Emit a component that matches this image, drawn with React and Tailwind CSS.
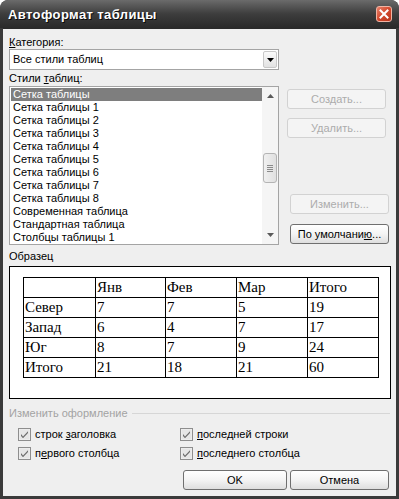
import React from "react";

const styles = [
  "Сетка таблицы",
  "Сетка таблицы 1",
  "Сетка таблицы 2",
  "Сетка таблицы 3",
  "Сетка таблицы 4",
  "Сетка таблицы 5",
  "Сетка таблицы 6",
  "Сетка таблицы 7",
  "Сетка таблицы 8",
  "Современная таблица",
  "Стандартная таблица",
  "Столбцы таблицы 1",
];

const rows = [
  ["", "Янв", "Фев", "Мар", "Итого"],
  ["Север", "7", "7", "5", "19"],
  ["Запад", "6", "4", "7", "17"],
  ["Юг", "8", "7", "9", "24"],
  ["Итого", "21", "18", "21", "60"],
];

const Button = ({ children, disabled, className = "" }) => (
  <div
    className={
      "h-[20px] flex items-center justify-center rounded-[3px] border " +
      (disabled
        ? "border-[#d2d2d2] bg-[#f4f4f4] text-[#acacac] "
        : "border-[#6f6f6f] bg-linear-to-b from-white via-[#f4f4f4] to-[#dedede] text-black ") +
      className
    }
  >
    {children}
  </div>
);

const Check = ({ children }) => (
  <div className="flex items-center h-[13px]">
    <svg width="13" height="13" viewBox="0 0 13 13">
      <rect x="0.5" y="0.5" width="12" height="12" fill="#f2f2f2" stroke="#8e8e8e" />
      <rect x="1.5" y="1.5" width="10" height="10" fill="#e6e6e6" />
      <path d="M3 6 L5 8.5 L10 3.2 L10 5 L5 10.3 L3 8 Z" fill="#6e6e6e" />
    </svg>
    <span className="ml-[4px]">{children}</span>
  </div>
);

export default function App() {
  return (
    <div className="w-[399px] h-[499px] bg-[#3a3a3a] rounded-t-[8px] flex flex-col font-['Liberation_Sans',Arial,sans-serif] text-[11px] leading-[13px] text-black overflow-hidden">
      {/* title bar */}
      <div className="h-[28px] shrink-0 flex items-center justify-between pl-[8px] pr-[7px] rounded-t-[8px] bg-linear-to-b from-[#6b6b6b] via-[#3d3d3d] to-[#2a2a2a]">
        <span className="text-white font-bold text-[13px] tracking-[0.4px] [text-shadow:1px_1px_0_#0a0a0a]">
          Автоформат таблицы
        </span>
        <div className="w-[16px] h-[16px] rounded-[3px] border border-[#f0b4a4] bg-linear-to-br from-[#e8806a] via-[#d2472b] to-[#b8341c] flex items-center justify-center">
          <svg width="10" height="10" viewBox="0 0 10 10">
            <path d="M1.5 1.5 L8.5 8.5 M8.5 1.5 L1.5 8.5" stroke="white" strokeWidth="2" strokeLinecap="square" />
          </svg>
        </div>
      </div>

      {/* body */}
      <div className="flex-1 mx-[3px] mb-[3px] bg-[#efefef] border-t border-[#2a2a2a] pl-[6px] pt-[7px]">
        <div className="flex">
          <div className="w-[270px] flex flex-col">
            <div>
              <u>К</u>атегория:
            </div>
            <div className="h-[21px] bg-white border border-[#a4a4a4] flex items-center justify-between pl-[3px] pr-[1px]">
              <span>Все стили таблиц</span>
              <div className="w-[14px] h-[17px] rounded-[2px] border border-[#c8c8c8] bg-linear-to-b from-[#fafafa] to-[#e2e2e2] flex items-center justify-center">
                <svg width="7" height="4" viewBox="0 0 7 4">
                  <path d="M0 0 H7 L3.5 4 Z" fill="#000" />
                </svg>
              </div>
            </div>
            <div className="mt-[2px]">
              Стили <u>т</u>аблиц:
            </div>
            <div className="mt-[1px] h-[159px] bg-white border border-[#a4a4a4] flex">
              <div className="flex-1 pl-[1px] pt-[1px]">
                {styles.map((s, i) => (
                  <div
                    key={s}
                    className={
                      "h-[13px] pl-[2px] " + (i === 0 ? "bg-[#7e7e7e] text-white" : "")
                    }
                  >
                    {s}
                  </div>
                ))}
              </div>
              <div className="w-[16px] bg-[#f5f5f5] flex flex-col items-center">
                <svg className="mt-[7px]" width="7" height="4" viewBox="0 0 7 4">
                  <path d="M0 4 H7 L3.5 0 Z" fill="#5a5a5a" />
                </svg>
                <div className="mt-[55px] w-[14px] h-[30px] rounded-[3px] border border-[#b4b4b4] bg-linear-to-r from-[#f0f0f0] to-[#e0e0e0] flex flex-col items-center justify-center gap-[1px]">
                  <div className="w-[6px] h-[1px] bg-[#8a8a8a]" />
                  <div className="w-[6px] h-[1px] bg-[#8a8a8a]" />
                  <div className="w-[6px] h-[1px] bg-[#8a8a8a]" />
                  <div className="w-[6px] h-[1px] bg-[#8a8a8a]" />
                </div>
                <svg className="mt-auto mb-[7px]" width="7" height="4" viewBox="0 0 7 4">
                  <path d="M0 0 H7 L3.5 4 Z" fill="#5a5a5a" />
                </svg>
              </div>
            </div>
          </div>

          <div className="ml-[8px] flex flex-col">
            <Button disabled className="mt-[53px] w-[99px]">
              Создать...
            </Button>
            <Button disabled className="mt-[9px] w-[99px]">
              Удалить...
            </Button>
            <Button disabled className="mt-[56px] ml-[3px] w-[99px]">
              Изменить...
            </Button>
            <Button className="mt-[10px] ml-[3px] w-[99px]">
              По умолчани<u>ю</u>...
            </Button>
          </div>
        </div>

        <div className="mt-[5px]">Образец</div>
        <div className="mt-[3px] w-[382px] h-[133px] bg-white border border-black pl-[13px] pt-[10px]">
          <div className="inline-grid grid-cols-[72px_70px_71px_71px_71px] border-t border-l border-black font-['Liberation_Serif','Times_New_Roman',serif] text-[15px] leading-[19px]">
            {rows.flat().map((c, i) => (
              <div key={i} className="h-[20px] border-r border-b border-black pl-[1px]">
                {c}
              </div>
            ))}
          </div>
        </div>

        <div className="mt-[8px] flex items-center pr-[6px]">
          <span className="text-[#a3a3a3]">Изменить оформление</span>
          <div className="flex-1 ml-[4px] h-[1px] bg-[#d6d6d6]" />
        </div>

        <div className="mt-[8px] ml-[9px] grid grid-cols-[162px_200px] gap-y-[6px]">
          <Check>
            строк <u>з</u>аголовка
          </Check>
          <Check>
            <u>п</u>оследней строки
          </Check>
          <Check>
            п<u>е</u>рвого столбца
          </Check>
          <Check>
            <u>п</u>оследнего столбца
          </Check>
        </div>

        <div className="mt-[10px] flex pl-[174px] gap-[3px]">
          <Button className="w-[104px]">OK</Button>
          <Button className="w-[99px]">Отмена</Button>
        </div>
      </div>
    </div>
  );
}
